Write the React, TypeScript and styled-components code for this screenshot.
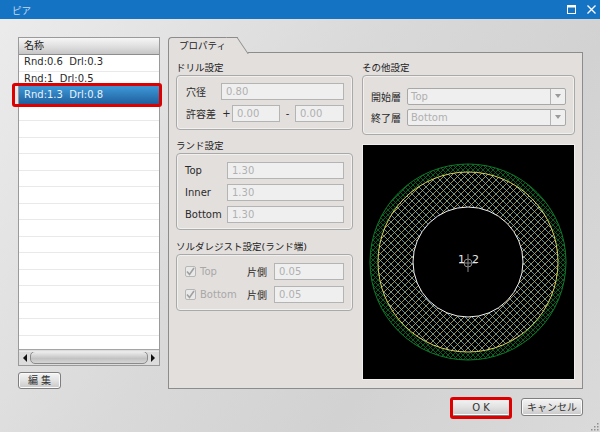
import React from "react";
import styled, {createGlobalStyle} from "styled-components";

const GlobalStyle = createGlobalStyle`
  html, body {
    margin: 0;
    padding: 0;
    background: #dcdcdc;
  }
  body {
    font-family: "DejaVu Sans", "Noto Sans CJK JP", sans-serif;
    font-size: 10px;
    color: #222;
  }
`;

const Window = styled.div`
  width: 600px;
  height: 432px;
  position: relative;
  overflow: hidden;
  display: flex;
  flex-direction: column;
  background: linear-gradient(125deg, #ececec 0%, #d9d9d9 45%, #d2d2d2 70%, #dadada 100%);
`;

const TitleBar = styled.div`
  height: 19px;
  flex: none;
  display: flex;
  align-items: center;
  justify-content: space-between;
  padding: 0 4px 0 12px;
  background: #1573c4;
  color: #c4dcf1;
  font-size: 9.5px;
`;

const TitleIcons = styled.div`
  display: flex;
  align-items: center;
  gap: 11px;
`;

const Body = styled.div`
  flex: 1;
  display: flex;
  flex-direction: column;
  padding: 18px 17px 0 18px;
`;

const MainRow = styled.div`
  display: flex;
  gap: 8px;
  height: 352px;
`;

const LeftColumn = styled.div`
  width: 142px;
  display: flex;
  flex-direction: column;
  gap: 6px;
`;

const ListBox = styled.div`
  height: 329px;
  box-sizing: border-box;
  border: 1px solid #9a9a9a;
  background: #fff;
  display: flex;
  flex-direction: column;
`;

const ListHeader = styled.div`
  height: 17px;
  flex: none;
  box-sizing: border-box;
  padding-left: 5px;
  line-height: 16px;
  background: linear-gradient(#f6f6f6, #dedede 55%, #c6c6c6);
  border-bottom: 1px solid #8d8d8d;
`;

const Rows = styled.div`
  flex: 1;
  min-height: 0;
`;

const ListRow = styled.div<{ $selected?: boolean }>`
  height: 16.5px;
  box-sizing: border-box;
  position: relative;
  padding-left: 5px;
  line-height: 14px;
  white-space: pre;
  border-bottom: 1px solid #e9e9e9;
  color: ${(p) => (p.$selected ? "#e8f2fb" : "#2a2a2a")};
  background: ${(p) => (p.$selected ? "linear-gradient(#3b93d2, #1f5f9e)" : "transparent")};
  ${(p) => p.$selected && "box-shadow: 0 -2px 0 #3b93d2;"}

  ${(p) =>
    p.$selected &&
    `&::after {
      content: "";
      position: absolute;
      inset: -5px -3px -3px -7px;
      border: 3px solid #dc0000;
      border-radius: 3px;
    }`}
`;

const ScrollBar = styled.div`
  height: 16px;
  flex: none;
  box-sizing: border-box;
  display: flex;
  align-items: center;
  gap: 3px;
  padding: 0 4px 0 4px;
  background: #dcdcdc;
  border-top: 1px solid #a5a5a5;
`;

const ScrollThumb = styled.div`
  flex: 1;
  height: 11px;
  border: 1px solid #8b8b8b;
  border-radius: 5px;
  background: linear-gradient(#ececec, #c2c2c2 60%, #d5d5d5);
`;

const Arrow = styled.div<{ $right?: boolean }>`
  width: 0;
  height: 0;
  border-top: 4px solid transparent;
  border-bottom: 4px solid transparent;
  ${(p) => (p.$right ? "border-left: 4px solid #111;" : "border-right: 4px solid #111;")}
`;

const Button = styled.button<{ $width: number; $marked?: boolean }>`
  width: ${(p) => p.$width}px;
  height: 18px;
  padding: 0;
  position: relative;
  box-sizing: border-box;
  border: 1px solid #7e7e7e;
  border-radius: 3px;
  background: linear-gradient(#f4f4f4, #e2e2e2 50%, #c8c8c8);
  box-shadow: inset 0 0 0 1px #fafafa;
  font-family: inherit;
  font-size: 10px;
  color: #333;
  line-height: 15px;

  ${(p) =>
    p.$marked &&
    `&::after {
      content: "";
      position: absolute;
      inset: -2px -2px -4px -2px;
      border: 3px solid #dc0000;
      border-radius: 3px;
    }`}
`;

const RightColumn = styled.div`
  flex: 1;
  display: flex;
  flex-direction: column;
`;

const Tab = styled.div`
  width: 70px;
  height: 16px;
  flex: none;
  box-sizing: border-box;
  position: relative;
  z-index: 1;
  margin-bottom: -1px;
  padding-left: 10px;
  line-height: 16px;
  font-size: 9.5px;
  background: #e3dfdd;
  border: 1px solid #8c8c8c;
  border-right: none;
  border-bottom: none;
  border-top-left-radius: 4px;

  &::after {
    content: "";
    position: absolute;
    top: -1px;
    right: -5px;
    width: 10px;
    height: 16px;
    background: #e3dfdd;
    border-right: 1px solid #8c8c8c;
    border-top: 1px solid #8c8c8c;
    transform: skewX(34deg);
  }
`;

const Panel = styled.div`
  flex: 1;
  box-sizing: border-box;
  display: flex;
  gap: 9px;
  padding: 7px 7px 8px 7px;
  background: #e3dfdd;
  border: 1px solid #8c8c8c;
`;

const PanelColumn = styled.div<{ $width: number }>`
  width: ${(p) => p.$width}px;
  display: flex;
  flex-direction: column;
`;

const SectionLabel = styled.div<{ $top?: number }>`
  height: 15px;
  line-height: 16px;
  font-size: 9.5px;
  margin-top: ${(p) => p.$top || 0}px;
  white-space: nowrap;
`;

const Group = styled.div<{ $height: number; $paddingTop: number; $gap: number }>`
  height: ${(p) => p.$height}px;
  box-sizing: border-box;
  display: flex;
  flex-direction: column;
  gap: ${(p) => p.$gap}px;
  padding: ${(p) => p.$paddingTop}px 8px 0 8px;
  border: 1px solid #a9a9a9;
  border-radius: 4px;
  box-shadow: inset 0 0 0 1px #f2f0ef;
`;

const FieldRow = styled.div`
  display: flex;
  align-items: center;
  height: 16px;
`;

const FieldLabel = styled.div<{ $width: number; $indent?: number; $muted?: boolean }>`
  width: ${(p) => p.$width}px;
  flex: none;
  box-sizing: border-box;
  padding-left: ${(p) => p.$indent || 0}px;
  color: ${(p) => (p.$muted ? "#a8a8a8" : "#2a2a2a")};
  white-space: nowrap;
`;

const TextInput = styled.div<{ $width?: number }>`
  ${(p) => (p.$width ? `width: ${p.$width}px; flex: none;` : "flex: 1;")}
  height: 17px;
  box-sizing: border-box;
  padding-left: 4px;
  line-height: 15px;
  color: #b0b0b0;
  background: #efefef;
  border: 1px solid #b4b4b4;
`;

const Sign = styled.div<{ $width: number }>`
  width: ${(p) => p.$width}px;
  flex: none;
  text-align: center;
  color: #2a2a2a;
`;

const Check = styled.div`
  width: 11px;
  height: 11px;
  flex: none;
  margin-right: 4px;
  box-sizing: border-box;
  display: flex;
  align-items: center;
  justify-content: center;
  background: #e9e9e9;
  border: 1px solid #b6b6b6;
  border-radius: 2px;
`;

const Select = styled.div`
  flex: 1;
  height: 17px;
  box-sizing: border-box;
  display: flex;
  border: 1px solid #a8a8a8;
  border-radius: 2px;
  background: #efefef;
  color: #b0b0b0;
`;

const SelectText = styled.div`
  flex: 1;
  padding-left: 3px;
  line-height: 15px;
`;

const SelectButton = styled.div`
  width: 14px;
  display: flex;
  align-items: center;
  justify-content: center;
  border-left: 1px solid #b4b4b4;

  &::before {
    content: "";
    border-left: 3px solid transparent;
    border-right: 3px solid transparent;
    border-top: 4px solid #9a9a9a;
  }
`;

const Preview = styled.div`
  width: 213px;
  height: 236px;
  margin-top: 9px;
  box-sizing: border-box;
  background: #000;
  border: 1px solid #f1efee;
`;

const Footer = styled.div`
  display: flex;
  justify-content: flex-end;
  gap: 10px;
  margin-top: 9px;
`;

const Grip = styled.svg`
  position: absolute;
  right: 1px;
  bottom: 1px;
`;

const rowsData = ["Rnd:0.6  Drl:0.3", "Rnd:1  Drl:0.5", "Rnd:1.3  Drl:0.8"];

function PreviewArt() {
  const cx = 105;
  const cy = 117;
  const ring = (r1: number, r2: number) =>
    `M${cx - r1} ${cy}a${r1} ${r1} 0 1 0 ${r1 * 2} 0a${r1} ${r1} 0 1 0 ${-r1 * 2} 0Z` +
    `M${cx - r2} ${cy}a${r2} ${r2} 0 1 0 ${r2 * 2} 0a${r2} ${r2} 0 1 0 ${-r2 * 2} 0Z`;
  return (
    <svg width="211" height="234" viewBox="0 0 211 234" style={{display: "block"}}>
      <defs>
        <pattern id="greenHatch" width="5" height="5" patternUnits="userSpaceOnUse">
          <path d="M-1 6L6 -1M-1 1L1 -1M4 6L6 4M-1 -1L6 6M-1 4L1 6M4 -1L6 1" stroke="#0b6a24" strokeWidth="0.9" />
        </pattern>
        <pattern id="padHatch" width="7" height="7" patternUnits="userSpaceOnUse">
          <path d="M-1 -1L8 8M-1 6L1 8M6 -1L8 1" stroke="#6db6d6" strokeWidth="0.8" />
          <path d="M-1 8L8 -1M-1 1L1 -1M6 8L8 6" stroke="#c9b650" strokeWidth="0.8" />
        </pattern>
      </defs>
      <path d={ring(98, 90)} fill="url(#greenHatch)" fillRule="evenodd" />
      <path d={ring(90, 55)} fill="url(#padHatch)" fillRule="evenodd" />
      <circle cx={cx} cy={cy} r="98" fill="none" stroke="#0f7a2a" strokeWidth="1" />
      <circle cx={cx} cy={cy} r="90" fill="none" stroke="#e0cf62" strokeWidth="1" />
      <circle cx={cx} cy={cy} r="55" fill="#000" stroke="#f2f2f2" strokeWidth="1" />
      <circle cx={cx} cy={cy + 1} r="4" fill="none" stroke="#8a8a8a" strokeWidth="1" />
      <path d={`M${cx - 9} ${cy + 1}H${cx + 9}M${cx} ${cy - 8}V${cy + 10}`} stroke="#8a8a8a" strokeWidth="1" />
      <text x={cx - 10} y={cy + 1} fill="#e8e8e8" fontSize="11" fontFamily="DejaVu Sans, sans-serif">1</text>
      <text x={cx + 4} y={cy + 1} fill="#e8e8e8" fontSize="11" fontFamily="DejaVu Sans, sans-serif">2</text>
    </svg>
  );
}

function CheckMark() {
  return (
    <svg width="9" height="9" viewBox="0 0 9 9">
      <path d="M1 4.5L3.5 7.5L8 1" fill="none" stroke="#a0a0a0" strokeWidth="1.6" />
    </svg>
  );
}

export default function App() {
  return (
    <>
      <GlobalStyle />
      <Window>
        <TitleBar>
          <span>ピア</span>
          <TitleIcons>
            <svg width="9" height="9" viewBox="0 0 9 9">
              <rect x="0.5" y="0.5" width="8" height="8" fill="none" stroke="#fff" />
              <rect x="0" y="0" width="9" height="2.5" fill="#fff" />
            </svg>
            <svg width="9" height="9" viewBox="0 0 9 9">
              <path d="M0.5 0.5L8.5 8.5M8.5 0.5L0.5 8.5" stroke="#fff" strokeWidth="1.3" />
            </svg>
          </TitleIcons>
        </TitleBar>
        <Body>
          <MainRow>
            <LeftColumn>
              <ListBox>
                <ListHeader>名称</ListHeader>
                <Rows>
                  {Array.from({length: 18}).map((_, i) => (
                    <ListRow key={i} $selected={i === 2}>
                      {rowsData[i] || ""}
                    </ListRow>
                  ))}
                </Rows>
                <ScrollBar>
                  <Arrow />
                  <ScrollThumb />
                  <Arrow $right />
                </ScrollBar>
              </ListBox>
              <Button $width={43}>編 集</Button>
            </LeftColumn>
            <RightColumn>
              <Tab>プロパティ</Tab>
              <Panel>
                <PanelColumn $width={177}>
                  <SectionLabel>ドリル設定</SectionLabel>
                  <Group $height={55} $paddingTop={7} $gap={6}>
                    <FieldRow>
                      <FieldLabel $width={36} $indent={1}>穴径</FieldLabel>
                      <TextInput>0.80</TextInput>
                    </FieldRow>
                    <FieldRow>
                      <FieldLabel $width={36} $indent={1}>許容差</FieldLabel>
                      <Sign $width={11}>+</Sign>
                      <TextInput $width={48}>0.00</TextInput>
                      <Sign $width={15}>-</Sign>
                      <TextInput>0.00</TextInput>
                    </FieldRow>
                  </Group>
                  <SectionLabel $top={8}>ランド設定</SectionLabel>
                  <Group $height={77} $paddingTop={8} $gap={6}>
                    <FieldRow>
                      <FieldLabel $width={42}>Top</FieldLabel>
                      <TextInput>1.30</TextInput>
                    </FieldRow>
                    <FieldRow>
                      <FieldLabel $width={42}>Inner</FieldLabel>
                      <TextInput>1.30</TextInput>
                    </FieldRow>
                    <FieldRow>
                      <FieldLabel $width={42}>Bottom</FieldLabel>
                      <TextInput>1.30</TextInput>
                    </FieldRow>
                  </Group>
                  <SectionLabel $top={9}>ソルダレジスト設定(ランド端)</SectionLabel>
                  <Group $height={57} $paddingTop={8} $gap={7}>
                    <FieldRow>
                      <Check><CheckMark /></Check>
                      <FieldLabel $width={47} $muted>Top</FieldLabel>
                      <FieldLabel $width={27}>片側</FieldLabel>
                      <TextInput>0.05</TextInput>
                    </FieldRow>
                    <FieldRow>
                      <Check><CheckMark /></Check>
                      <FieldLabel $width={47} $muted>Bottom</FieldLabel>
                      <FieldLabel $width={27}>片側</FieldLabel>
                      <TextInput>0.05</TextInput>
                    </FieldRow>
                  </Group>
                </PanelColumn>
                <PanelColumn $width={213}>
                  <SectionLabel>その他設定</SectionLabel>
                  <Group $height={60} $paddingTop={12} $gap={5}>
                    <FieldRow>
                      <FieldLabel $width={36}>開始層</FieldLabel>
                      <Select>
                        <SelectText>Top</SelectText>
                        <SelectButton />
                      </Select>
                    </FieldRow>
                    <FieldRow>
                      <FieldLabel $width={36}>終了層</FieldLabel>
                      <Select>
                        <SelectText>Bottom</SelectText>
                        <SelectButton />
                      </Select>
                    </FieldRow>
                  </Group>
                  <Preview>
                    <PreviewArt />
                  </Preview>
                </PanelColumn>
              </Panel>
            </RightColumn>
          </MainRow>
          <Footer>
            <Button $width={60} $marked>O K</Button>
            <Button $width={62}>キャンセル</Button>
          </Footer>
        </Body>
        <Grip width="9" height="9" viewBox="0 0 9 9">
          <path d="M7 1h1.5v1.5H7zM4 4h1.5v1.5H4zM7 4h1.5v1.5H7zM1 7h1.5v1.5H1zM4 7h1.5v1.5H4zM7 7h1.5v1.5H7z" fill="#8f8f8f" />
        </Grip>
      </Window>
    </>
  );
}
